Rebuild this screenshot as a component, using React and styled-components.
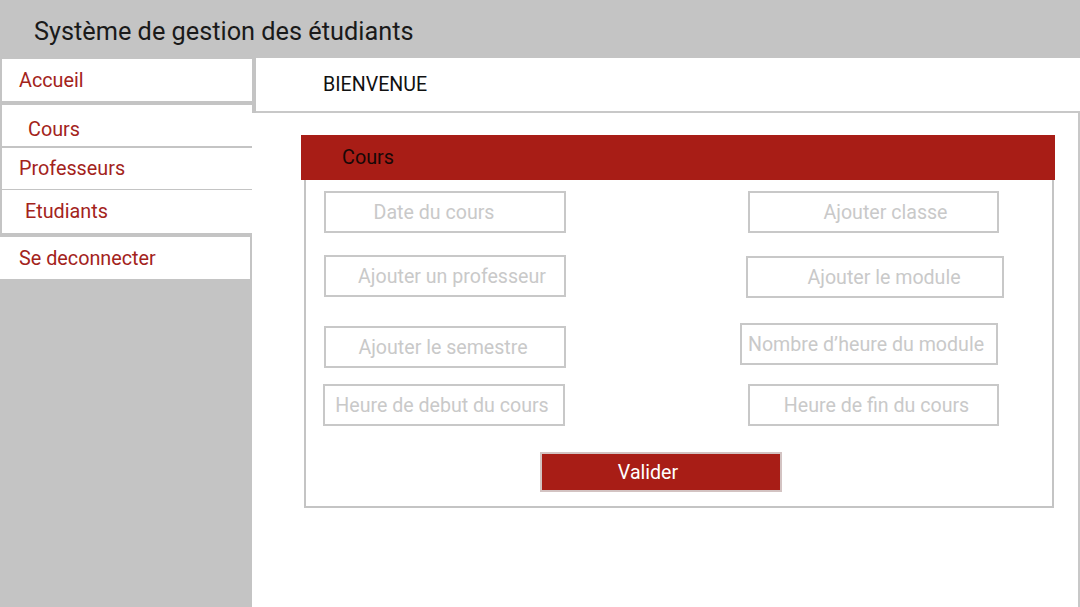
import React from 'react';
import styled, { createGlobalStyle } from 'styled-components';

const GlobalStyle = createGlobalStyle`
  html, body {
    margin: 0;
    padding: 0;
    background: #ffffff;
    font-family: Roboto, "Liberation Sans", Arial, sans-serif;
  }
`;

const RED = '#a81d16';
const GREY = '#c4c4c4';
const LINE = '#c8c8c8';

const Page = styled.div`
  width: 1080px;
  height: 607px;
  display: grid;
  grid-template-columns: 252px 1fr;
  grid-template-rows: 58px 1fr;
  overflow: hidden;
`;

const TopBar = styled.header`
  grid-column: 1 / 3;
  background: ${GREY};
  display: flex;
  align-items: center;
  padding: 4px 0 0 34px;
  font-size: 25.3px;
  color: #1a1a1a;
`;

const Sidebar = styled.nav`
  background: ${GREY};
  display: flex;
  flex-direction: column;
  padding-top: 1px;
`;

const NavItem = styled.div`
  box-sizing: border-box;
  height: ${p => p.$h || 42}px;
  width: 250px;
  margin-left: ${p => (p.$flush ? 0 : 2)}px;
  margin-top: ${p => p.$gap || 0}px;
  background: #fff;
  display: flex;
  align-items: center;
  padding-left: ${p => p.$indent - (p.$flush ? 0 : 2)}px;
  padding-top: ${p => p.$drop || 0}px;
  font-size: 19.8px;
  color: #a3231b;
`;

const Main = styled.main`
  background: ${GREY};
  display: flex;
  flex-direction: column;
`;

const Welcome = styled.div`
  box-sizing: border-box;
  height: 55px;
  margin-left: 4px;
  background: #fff;
  border-bottom: 2px solid ${LINE};
  display: flex;
  align-items: center;
  padding-left: 67px;
  font-size: 19.6px;
  color: #111;
`;

const Content = styled.section`
  flex: 1;
  background: #fff;
  border-right: 2px solid ${LINE};
  padding: 22px 23px 0 49px;
`;

const Card = styled.div`
  width: 754px;
`;

const CardHead = styled.div`
  height: 45px;
  background: ${RED};
  display: flex;
  align-items: center;
  padding-left: 41px;
  font-size: 19.8px;
  color: #160807;
`;

const CardBody = styled.div`
  box-sizing: border-box;
  height: 328px;
  margin: 0 1px 0 3px;
  border: 2px solid ${GREY};
  border-top: none;
  padding: 11px 0 0 18px;
  display: flex;
  flex-direction: column;
`;

const FieldRow = styled.div`
  display: grid;
  grid-template-columns: 416px 1fr;
  align-items: start;
  margin-top: ${p => p.$gap || 0}px;
`;

const Field = styled.div`
  box-sizing: border-box;
  height: 42px;
  width: ${p => p.$w}px;
  margin-left: ${p => p.$x || 0}px;
  margin-top: ${p => p.$y || 0}px;
  border: 2px solid ${LINE};
  display: flex;
  align-items: center;
  justify-content: center;
  padding-left: ${p => Math.max(0, (p.$nudge || 0) * 2)}px;
  padding-right: ${p => Math.max(0, -(p.$nudge || 0) * 2)}px;
  font-size: 19.6px;
  color: #c9c9c9;
  white-space: nowrap;
`;

const SubmitButton = styled.button`
  box-sizing: border-box;
  width: 242px;
  height: 40px;
  margin: 26px 0 0 216px;
  background: ${RED};
  border: 2px solid #d3c3c2;
  color: #fff;
  font-family: inherit;
  font-size: 19.6px;
  padding: 0 26px 0 0;
`;

export default function App() {
  return (
    <>
      <GlobalStyle />
      <Page>
        <TopBar>Système de gestion des étudiants</TopBar>
        <Sidebar>
          <NavItem $indent={19}>Accueil</NavItem>
          <NavItem $indent={28} $gap={4} $h={41} $drop={7}>Cours</NavItem>
          <NavItem $indent={19} $gap={2} $h={41}>Professeurs</NavItem>
          <NavItem $indent={25} $gap={1} $h={43}>Etudiants</NavItem>
          <NavItem $indent={19} $gap={4} $flush>Se deconnecter</NavItem>
        </Sidebar>
        <Main>
          <Welcome>BIENVENUE</Welcome>
          <Content>
            <Card>
              <CardHead>Cours</CardHead>
              <CardBody>
                <FieldRow>
                  <Field $w={242} $nudge={-11}>Date du cours</Field>
                  <Field $w={251} $x={8} $nudge={12}>Ajouter classe</Field>
                </FieldRow>
                <FieldRow $gap={22}>
                  <Field $w={242} $nudge={7}>Ajouter un professeur</Field>
                  <Field $w={258} $x={6} $y={1} $nudge={9}>Ajouter le module</Field>
                </FieldRow>
                <FieldRow $gap={25}>
                  <Field $w={242} $y={3} $nudge={-2}>Ajouter le semestre</Field>
                  <Field $w={258} $nudge={-3}>Nombre d’heure du module</Field>
                </FieldRow>
                <FieldRow $gap={16}>
                  <Field $w={242} $x={-1} $nudge={-2}>Heure de debut du cours</Field>
                  <Field $w={251} $x={8} $nudge={3}>Heure de fin du cours</Field>
                </FieldRow>
                <SubmitButton type="button">Valider</SubmitButton>
              </CardBody>
            </Card>
          </Content>
        </Main>
      </Page>
    </>
  );
}
